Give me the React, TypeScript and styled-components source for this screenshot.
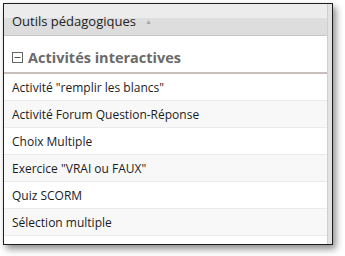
import * as React from "react";
import styled, { createGlobalStyle } from "styled-components";

const GlobalStyle = createGlobalStyle`
  html, body {
    margin: 0;
    padding: 0;
    background: #fff;
  }
  body {
    font-family: "Open Sans", "Liberation Sans", sans-serif;
  }
`;

const items = [
  'Activité "remplir les blancs"',
  "Activité Forum Question-Réponse",
  "Choix Multiple",
  'Exercice "VRAI ou FAUX"',
  "Quiz SCORM",
  "Sélection multiple",
];

const App: React.FC = () => {
  return (
    <>
      <GlobalStyle />
      <Page>
        <Window>
          <Content>
            <HeaderBar>
              <HeaderTitle>Outils pédagogiques</HeaderTitle>
              <SortArrow>▲</SortArrow>
            </HeaderBar>
            <SectionRow>
              <CollapseIcon viewBox="0 0 11 11">
                <rect x="0.5" y="0.5" width="10" height="10" fill="#fff" stroke="#666" />
                <line x1="2.5" y1="5.5" x2="8.5" y2="5.5" stroke="#555" />
              </CollapseIcon>
              <SectionTitle>Activités interactives</SectionTitle>
            </SectionRow>
            <List>
              {items.map((label, i) => (
                <Row key={label} $striped={i % 2 === 1}>
                  {label}
                </Row>
              ))}
            </List>
          </Content>
          <ScrollGutter />
        </Window>
      </Page>
    </>
  );
};

export default App;

const Page = styled.div`
  width: 345px;
  height: 256px;
  padding: 3px 0 0 3px;
  box-sizing: border-box;
`;

const Window = styled.div`
  display: flex;
  width: 330px;
  height: 242px;
  box-sizing: border-box;
  border: 1px solid #1e1e1e;
  background: #fff;
  box-shadow: 3px 4px 7px rgba(0, 0, 0, 0.45);
  overflow: hidden;
`;

const Content = styled.div`
  flex: 1;
  display: flex;
  flex-direction: column;
`;

const ScrollGutter = styled.div`
  width: 4px;
  background: #e2e2e2;
  border-left: 1px solid #cfcfcf;
`;

const HeaderBar = styled.div`
  display: flex;
  align-items: center;
  height: 32px;
  padding: 3px 0 0 8px;
  box-sizing: border-box;
  gap: 9px;
  background: linear-gradient(#ececec 0%, #ececec 45%, #dedede 46%, #dcdcdc 100%);
  border-bottom: 1px solid #c6c6c6;
`;

const HeaderTitle = styled.span`
  font-size: 13px;
  color: #222;
`;

const SortArrow = styled.span`
  font-size: 7px;
  color: #a8a8a8;
  margin-top: 1px;
`;

const SectionRow = styled.div`
  display: flex;
  align-items: center;
  height: 38px;
  padding: 6px 0 0 8px;
  box-sizing: border-box;
  gap: 5px;
  border-bottom: 2px solid #c8bebb;
`;

const CollapseIcon = styled.svg`
  width: 11px;
  height: 11px;
`;

const SectionTitle = styled.span`
  font-size: 14.5px;
  font-weight: 700;
  color: #6a6a6a;
`;

const List = styled.div`
  display: flex;
  flex-direction: column;
`;

const Row = styled.div<{ $striped: boolean }>`
  display: flex;
  align-items: center;
  height: 27px;
  padding-left: 8px;
  box-sizing: border-box;
  font-size: 12px;
  color: #1c1c1c;
  background: ${(p) => (p.$striped ? "#f8f8f8" : "#fff")};
  border-bottom: 1px solid #ebebeb;
`;
